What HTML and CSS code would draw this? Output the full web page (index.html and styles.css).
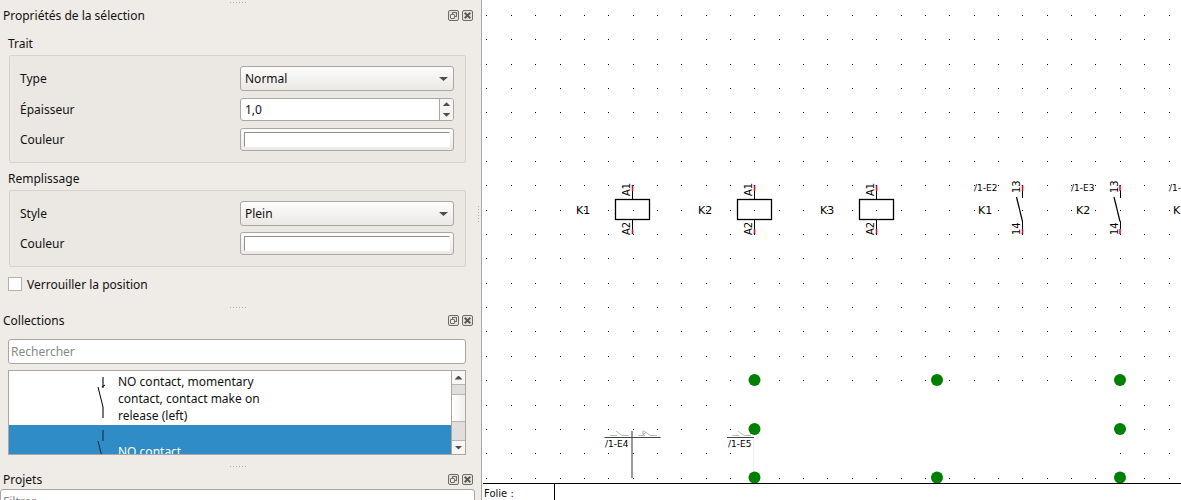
FILE: index.html
```html
<!DOCTYPE html>
<html lang="fr">
<head>
<meta charset="utf-8">
<title>Éditeur de schémas</title>
<link rel="stylesheet" href="styles.css">
</head>
<body>
<svg class="defs" width="0" height="0" aria-hidden="true">
  <symbol id="i-float" viewBox="0 0 11 11">
    <rect x="0.5" y="0.5" width="10" height="10" rx="1.5" fill="#e6e3df" stroke="#6e6c6a"/>
    <rect x="4.5" y="2.5" width="4" height="4" fill="none" stroke="#6e6c6a"/>
    <rect x="2.5" y="4.5" width="4" height="4" rx="0.5" fill="#efebe7" stroke="#6e6c6a"/>
  </symbol>
  <symbol id="i-close" viewBox="0 0 11 11">
    <rect x="0.5" y="0.5" width="10" height="10" rx="1.5" fill="#e6e3df" stroke="#6e6c6a"/>
    <path d="M2.7 2.7L8.3 8.3M8.3 2.7L2.7 8.3" stroke="#5c5a58" stroke-width="2"/>
  </symbol>
</svg>
<div class="app">
  <aside class="docks">
    <section class="dock">
      <div class="grip"></div>
      <header class="dock-head">
        <h2>Propriétés de la sélection</h2>
        <button class="tool" aria-label="Détacher"><svg><use href="#i-float"/></svg></button>
        <button class="tool" aria-label="Fermer"><svg><use href="#i-close"/></svg></button>
      </header>
      <div class="dock-body props">
        <h3>Trait</h3>
        <div class="group">
          <label for="type">Type</label>
          <span class="combo"><select id="type"><option>Normal</option></select></span>
          <label for="width">Épaisseur</label>
          <span class="spin">
            <input id="width" type="text" inputmode="decimal" value="1,0">
            <span class="steps">
              <button class="up" aria-label="Augmenter"></button>
              <button class="down" aria-label="Diminuer"></button>
            </span>
          </span>
          <label for="line-color">Couleur</label>
          <button class="color" id="line-color"><span class="swatch"></span></button>
        </div>
        <h3>Remplissage</h3>
        <div class="group fill">
          <label for="style">Style</label>
          <span class="combo"><select id="style"><option>Plein</option></select></span>
          <label for="fill-color">Couleur</label>
          <button class="color" id="fill-color"><span class="swatch"></span></button>
        </div>
        <label class="check"><input type="checkbox">Verrouiller la position</label>
      </div>
    </section>
    <section class="dock">
      <div class="grip"></div>
      <header class="dock-head">
        <h2>Collections</h2>
        <button class="tool" aria-label="Détacher"><svg><use href="#i-float"/></svg></button>
        <button class="tool" aria-label="Fermer"><svg><use href="#i-close"/></svg></button>
      </header>
      <div class="dock-body collections">
        <input class="field" type="text" placeholder="Rechercher" aria-label="Rechercher">
        <div class="list">
          <ul>
            <li>
              <svg class="thumb" width="12" height="44" viewBox="0 0 12 44">
                <path d="M6 1v11M6 31v11" stroke="#777" stroke-width="2"/>
                <path d="M5 11l3 -2M1 11L6 31" stroke="#000" fill="none"/>
              </svg>
              <span>NO contact, momentary contact, contact make on release (left)</span>
            </li>
            <li class="selected">
              <svg class="thumb" width="12" height="44" viewBox="0 0 12 44">
                <path d="M6 0v11M6 31v11" stroke="#1f587e" stroke-width="2"/>
                <path d="M1 11L6 31" stroke="#0b2233" fill="none"/>
              </svg>
              <span>NO contact</span>
            </li>
          </ul>
          <div class="scroll">
            <button class="up" aria-label="Défiler vers le haut"></button>
            <div class="track"><div class="thumb-bar"></div></div>
            <button class="down" aria-label="Défiler vers le bas"></button>
          </div>
        </div>
      </div>
    </section>
    <section class="dock">
      <div class="grip"></div>
      <header class="dock-head">
        <h2>Projets</h2>
        <button class="tool" aria-label="Détacher"><svg><use href="#i-float"/></svg></button>
        <button class="tool" aria-label="Fermer"><svg><use href="#i-close"/></svg></button>
      </header>
      <input class="field" type="text" placeholder="Filtrer" aria-label="Filtrer">
    </section>
  </aside>
  <div class="splitter"><div class="vgrip"></div></div>
  <main class="sheet">
    <svg class="diagram" role="img" aria-label="Schéma">
      <defs>
        <g id="coil">
          <rect x="-16.500" y="199.500" width="34" height="20" fill="none" stroke="#000" stroke-width="1.300"/>
          <path class="wire" d="M0.5 190v9M0.5 220v9"/>
          <path class="pin" d="M0.5 186v5M0.5 229v4"/>
          <path class="end" d="M0.5 185v1M0.5 233v1"/>
          <text class="term" transform="translate(-2 196) rotate(-90)">A1</text>
          <text class="term" transform="translate(-2 235) rotate(-90)">A2</text>
        </g>
        <g id="contact">
          <path class="wire" d="M0.5 190v8M0.5 221v8"/>
          <path d="M-5.5 197L0.5 221.500" stroke="#000" stroke-width="1.200"/>
          <path class="pin" d="M0.5 186v5M0.5 229v4"/>
          <path class="end" d="M0.5 185v1M0.5 233v1"/>
          <text class="term" transform="translate(-2 193) rotate(-90)">13</text>
          <text class="term" transform="translate(-2 235) rotate(-90)">14</text>
        </g>
        <path id="no" d="M0 4.500h7M12 4.500h7M6 0l7 5" fill="none" stroke="#bbb"/>
      </defs>
      <g transform="translate(-482 0)">
        <path id="grid" class="wire"/>
        <use href="#coil" x="632"/>
        <use href="#coil" x="754"/>
        <use href="#coil" x="876"/>
        <g class="name">
          <text x="576" y="214">K1</text>
          <text x="698" y="214">K2</text>
          <text x="820" y="214">K3</text>
          <text x="978" y="214">K1</text>
          <text x="1076" y="214">K2</text>
          <text x="1173" y="214">K3</text>
        </g>
        <use href="#contact" x="1022"/>
        <use href="#contact" x="1119.500"/>
        <g class="ref">
          <text x="974" y="191">/1-E2</text>
          <text x="1071" y="191">/1-E3</text>
          <text x="1169" y="191">/1-E4</text>
          <text x="605" y="447">/1-E4</text>
          <text x="728" y="447">/1-E5</text>
        </g>
        <use href="#no" x="610" y="431"/>
        <use href="#no" x="638" y="431"/>
        <path d="M643 430.500v4l3 -2" fill="none" stroke="#aaa"/>
        <use href="#no" x="732" y="431"/>
        <path d="M632 431v47" stroke="#999" stroke-width="2"/>
        <path d="M604.500 437.500h56M727 437.500h27" stroke="#444"/>
        <path d="M753.500 438v36" stroke="#f0f0f0"/>
        <g fill="#008000">
          <circle cx="754.500" cy="380" r="6"/><circle cx="937" cy="380" r="6"/><circle cx="1120" cy="380" r="6"/>
          <circle cx="754.500" cy="429" r="6"/><circle cx="1120" cy="429" r="6"/>
          <circle cx="754.500" cy="477.500" r="6"/><circle cx="937" cy="477.500" r="6"/><circle cx="1120" cy="477.500" r="6"/>
        </g>
      </g>
    </svg>
    <footer class="title-block"><div class="folio">Folie :</div></footer>
  </main>
</div>
<script src="grid.js"></script>
</body>
</html>
```
FILE: styles.css
```css
* { box-sizing: border-box; }
body {
  margin: 0;
  background: #efebe7;
  color: #111;
  font: 12px/17px "Noto Sans", "Open Sans", sans-serif;
}
h2, h3, ul { margin: 0; padding: 0; font-size: inherit; font-weight: 400; }
button, input, select { font: inherit; color: inherit; margin: 0; }
button { padding: 0; }
.defs { position: absolute; }
.app { display: flex; height: 100vh; overflow: hidden; }
.docks { flex: 0 0 475px; }

.grip {
  width: 16px;
  height: 5px;
  margin: 0 auto;
  background: repeating-linear-gradient(90deg, #b3aeaa 0 1px, transparent 1px 3px) 0 2px / 100% 1px no-repeat;
}
.dock-head { display: flex; align-items: center; gap: 3px; height: 20px; padding: 1px 2px 0 3px; }
.dock-head h2 { flex: 1; }
.tool { display: flex; width: 11px; height: 11px; border: 0; background: none; }
.tool svg { width: 11px; height: 11px; }
.dock-body { padding: 8px 9px 9px 8px; }

.props { padding-bottom: 11px; }
.props h3 { height: 22px; line-height: 22px; }
.group {
  display: grid;
  grid-template-columns: 220px 1fr;
  row-gap: 7px;
  align-items: center;
  margin: 0 0 5px 1px;
  padding: 10px 11px 11px 10px;
  border: 1px solid #d5d1cd;
  border-radius: 2px;
  background: #ebe8e4;
}
.group.fill { row-gap: 6px; margin-bottom: 7px; }
.combo { position: relative; display: flex; }
.combo::after {
  content: "";
  position: absolute;
  right: 6px;
  top: 11px;
  width: 9px;
  height: 4px;
  background: #4f4d4b;
  clip-path: polygon(0 0, 100% 0, 50% 100%);
  pointer-events: none;
}
select {
  appearance: none;
  width: 100%;
  height: 25px;
  padding: 0 20px 0 4px;
  border: 1px solid #aaa6a3;
  border-radius: 3px;
  background: linear-gradient(#fdfdfc, #ebe8e5);
}
.spin {
  display: flex;
  height: 23px;
  border: 1px solid #aaa6a3;
  border-radius: 3px;
  background: #fff;
  overflow: hidden;
}
.spin input { flex: 1; min-width: 0; padding: 0 4px; border: 0; background: none; }
.steps { display: flex; flex-direction: column; width: 14px; border-left: 1px solid #aaa6a3; background: #f6f4f3; }
.steps button { flex: 1; }
.up, .down { display: grid; place-items: center; border: 0; background: none; }
.up::before, .down::before { content: ""; width: 8px; height: 4px; background: #4f4d4b; }
.up::before { clip-path: polygon(50% 0, 100% 100%, 0 100%); }
.down::before { clip-path: polygon(0 0, 100% 0, 50% 100%); }
.color {
  display: flex;
  height: 23px;
  padding: 3px;
  border: 1px solid #aaa6a3;
  border-radius: 3px;
  background: linear-gradient(#fdfdfc, #ebe8e5);
}
.swatch { flex: 1; height: 15px; border: 1px solid; border-color: #94908c #fff #fff #94908c; background: #fff; }
.check { display: flex; align-items: center; gap: 5px; height: 20px; }
.check input { appearance: none; width: 14px; height: 14px; border: 1px solid #b5b1ae; background: #fff; }

.field {
  display: block;
  width: 100%;
  height: 25px;
  padding: 0 2px;
  border: 1px solid #aaa6a3;
  border-radius: 3px;
  background: #fff;
}
.field::placeholder { color: #888; opacity: 1; }
.collections { padding-top: 9px; }
.list { display: flex; height: 85px; margin-top: 6px; border: 1px solid #aaa6a3; background: #fff; overflow: hidden; }
.list ul { flex: 1; list-style: none; }
.list li { display: flex; align-items: center; gap: 9px; height: 54px; padding-left: 88px; }
.list li span { width: 150px; }
.list .selected { height: 53px; background: #308cc6; color: #fff; }
.scroll { display: flex; flex-direction: column; width: 14px; border-left: 1px solid #aaa6a3; background: #f8f7f6; }
.scroll button { height: 13px; }
.track { flex: 1; padding-top: 9px; border: solid #b9b5b2; border-width: 1px 0; background: #e1dfdc; }
.thumb-bar { height: 28px; border: solid #b9b5b2; border-width: 1px 0; background: linear-gradient(90deg, #fff, #f1efed); }

.splitter { flex: 0 0 7px; padding: 206px 2px 0 3px; border-right: 1px solid #aaa6a3; }
.vgrip { width: 1px; height: 16px; background: repeating-linear-gradient(#b3aeaa 0 1px, transparent 1px 3px); }

.sheet { flex: 1; min-width: 0; display: flex; flex-direction: column; background: #fff; }
.diagram { display: block; flex: 1; width: 100%; min-height: 0; font-family: "DejaVu Sans", sans-serif; }
.wire { fill: none; stroke: #000; shape-rendering: crispEdges; }
.pin { fill: none; stroke: #f00; stroke-width: 1.5; }
.end { fill: none; stroke: #00f; stroke-width: 1.5; }
.term { font-size: 10px; }
.name { font-size: 11px; }
.ref { font-size: 9px; }
.title-block {
  display: flex;
  height: 17px;
  margin-left: 1px;
  border-top: 1px solid #000;
  font: 10px/19px "DejaVu Sans", sans-serif;
}
.folio { width: 72px; padding-left: 1px; border-right: 1px solid #000; }
```
FILE: grid.js
```javascript
const step = 24.36;
let d = "";
for (let row = 0; row < 20; row++) {
  for (let col = 0; col < 90; col++) {
    const inside = row > 15 && row < 19 && col > 10 && col < 26;
    if (inside) continue;
    const x = Math.floor(486.95 + col * step);
    const y = Math.floor(15.3 + row * step);
    d += `M${x} ${y}.5h1`;
  }
}
document.getElementById("grid").setAttribute("d", d);
```
